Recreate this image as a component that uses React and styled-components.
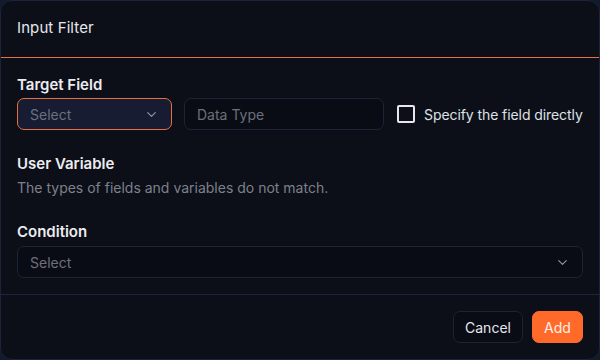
import React from "react";
import styled, { createGlobalStyle } from "styled-components";
import { ChevronDown } from "lucide-react";

const GlobalStyle = createGlobalStyle`
  html, body {
    margin: 0;
    padding: 0;
    background: #121a2e;
    font-family: Inter, "Noto Sans", sans-serif;
  }
  * { box-sizing: border-box; }
`;

const Dialog = styled.div`
  width: 600px;
  height: 360px;
  background: #0c0f17;
  border: 1px solid #1c2338;
  border-radius: 12px;
  display: flex;
  flex-direction: column;
  color: #e8e9ee;
  overflow: hidden;
`;

const Header = styled.div`
  height: 57px;
  padding: 0 16px 3px 16px;
  display: flex;
  align-items: center;
  font-size: 15px;
  letter-spacing: 0.1px;
  color: #e6e8ee;
  border-bottom: 1px solid #e8703f;
`;

const Body = styled.div`
  flex: 1;
  padding: 17px 16px 0 16px;
  display: flex;
  flex-direction: column;
`;

const Label = styled.div`
  font-size: 15px;
  font-weight: 600;
  color: #ececf0;
  margin-top: ${(props) => props.top || "0px"};
  height: 20px;
  line-height: 20px;
`;

const Hint = styled.div`
  font-size: 14px;
  color: #7d818c;
  margin-top: 5px;
  line-height: 18px;
`;

const Row = styled.div`
  display: flex;
  align-items: center;
  gap: 12px;
  margin-top: 3px;
`;

const SelectBox = styled.div`
  flex: none;
  width: ${(props) => props.width || "100%"};
  height: 32px;
  border-radius: 7px;
  border: 1px solid ${(props) => (props.active ? "#e8703f" : "#1d2438")};
  background: ${(props) => (props.active ? "#171c32" : "#090c14")};
  display: flex;
  align-items: center;
  justify-content: space-between;
  padding: 0 12px 0 12px;
  font-size: 14px;
  color: #6c707c;
  margin-top: ${(props) => props.top || "0px"};
`;

const Input = styled.div`
  flex: none;
  width: 200px;
  height: 32px;
  border-radius: 7px;
  border: 1px solid #1d2438;
  background: #090c14;
  display: flex;
  align-items: center;
  padding: 0 12px;
  font-size: 14px;
  color: #6c707c;
`;

const CheckLabel = styled.label`
  display: flex;
  align-items: center;
  gap: 9px;
  font-size: 14px;
  letter-spacing: -0.08px;
  white-space: nowrap;
  color: #dfe1e7;
  margin-left: 1px;
`;

const Box = styled.span`
  flex: none;
  width: 18px;
  height: 18px;
  border: 2px solid #e6e7ec;
  border-radius: 2px;
  display: inline-block;
`;

const Footer = styled.div`
  height: 65px;
  border-top: 1px solid #1c2440;
  display: flex;
  align-items: center;
  justify-content: flex-end;
  gap: 9px;
  padding: 0 16px;
`;

const Button = styled.button`
  height: 32px;
  width: ${(props) => props.width};
  padding: 0;
  border-radius: 7px;
  font-family: inherit;
  font-size: 14px;
  border: 1px solid ${(props) => (props.primary ? "#ff6a2b" : "#1d2438")};
  background: ${(props) => (props.primary ? "#ff6a2b" : "#090c14")};
  color: ${(props) => (props.primary ? "#fff1ea" : "#e6e7ec")};
`;

export default function App() {
  return (
    <>
      <GlobalStyle />
      <Dialog>
        <Header>Input Filter</Header>
        <Body>
          <Label>Target Field</Label>
          <Row>
            <SelectBox active width="155px">
              Select
              <ChevronDown size={15} color="#8a8fa0" />
            </SelectBox>
            <Input>Data Type</Input>
            <CheckLabel>
              <Box />
              Specify the field directly
            </CheckLabel>
          </Row>
          <Label top="24px">User Variable</Label>
          <Hint>The types of fields and variables do not match.</Hint>
          <Label top="25px">Condition</Label>
          <SelectBox top="4px">
            Select
            <ChevronDown size={15} color="#8a8fa0" />
          </SelectBox>
        </Body>
        <Footer>
          <Button width="70px">Cancel</Button>
          <Button primary width="51px">Add</Button>
        </Footer>
      </Dialog>
    </>
  );
}
